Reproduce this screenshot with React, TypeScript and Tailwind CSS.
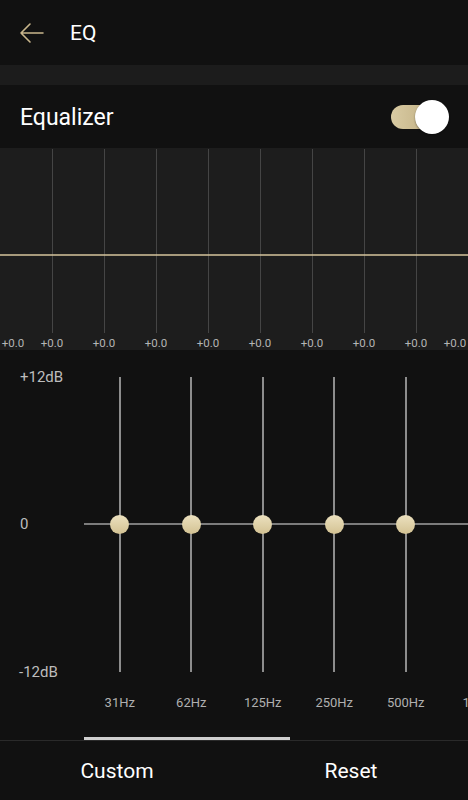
const gridX = [52, 104, 156, 208, 260, 312, 364, 416];
const valueLabels = [13, 52, 104, 156, 208, 260, 312, 364, 416, 455];
const bands = ["31Hz", "62Hz", "125Hz", "250Hz", "500Hz", "1kHz"];

function BackArrow() {
  return (
    <svg width="26" height="22" viewBox="0 0 26 22" fill="none" stroke="#c9b68c" strokeWidth="1.6" strokeLinecap="round" strokeLinejoin="round">
      <path d="M24 11H2M11 2 2 11l9 9" />
    </svg>
  );
}

function Curve() {
  return (
    <svg width="468" height="202" className="block">
      {gridX.map((x) => (
        <line key={x} x1={x + 0.5} y1="1" x2={x + 0.5} y2="185" stroke="#454545" strokeWidth="1" />
      ))}
      <line x1="0" y1="107" x2="468" y2="107" stroke="#d6c59c" strokeWidth="1.6" />
    </svg>
  );
}

export default function App() {
  return (
    <div className="w-[468px] h-[800px] bg-[#111111] text-white overflow-hidden flex flex-col" style={{ fontFamily: "Roboto, 'Noto Sans', sans-serif" }}>
      <div className="h-[65px] flex items-center pl-[19px] shrink-0">
        <BackArrow />
        <span className="ml-[25px] text-[21px] leading-none pt-[2px]">EQ</span>
      </div>
      <div className="h-[20px] bg-[#1c1c1c] shrink-0" />
      <div className="h-[63px] flex items-center justify-between pl-5 pr-[19px] shrink-0">
        <span className="text-[23px] leading-none pt-[2px]">Equalizer</span>
        <div className="relative w-[58px] h-[34px]">
          <div className="absolute left-0 top-[5px] w-[52px] h-[24px] rounded-full bg-gradient-to-r from-[#d9cba3] to-[#bba97c]" />
          <div className="absolute right-0 top-0 w-[34px] h-[34px] rounded-full bg-white shadow-[0_1px_2px_rgba(0,0,0,0.4)]" />
        </div>
      </div>
      <div className="relative h-[202px] bg-[#1d1d1d] shrink-0">
        <Curve />
        {valueLabels.map((x) => (
          <span key={x} className="absolute top-[188px] -translate-x-1/2 text-[11.5px] leading-[14px] text-[#b4b4b4]" style={{ left: x }}>
            +0.0
          </span>
        ))}
      </div>
      <div className="flex shrink-0 pt-[27px] h-[387px]">
        <div className="w-[84px] shrink-0 pl-5 relative text-[15px] text-[#bdbdbd] leading-none">
          <span className="absolute left-5 top-[-7px]">+12dB</span>
          <span className="absolute left-5 top-[140px]">0</span>
          <span className="absolute left-[19px] top-[288px]">-12dB</span>
        </div>
        <div className="relative flex">
          <div className="absolute left-0 top-[146px] w-[420px] h-[2px] bg-[#7c7c7c]" />
          {bands.map((b) => (
            <div key={b} className="relative w-[71.5px] shrink-0 flex flex-col items-center">
              <div className="w-[2px] h-[295px] bg-[#8d8d8d]" />
              <div className="absolute top-[138px] w-[19px] h-[19px] rounded-full bg-gradient-to-b from-[#ece1bf] to-[#d3c293]" />
              <span className="mt-[24px] text-[13px] leading-none text-[#b0b0b0]">{b}</span>
            </div>
          ))}
        </div>
      </div>
      <div className="h-[3px] shrink-0 flex">
        <div className="ml-[84px] w-[206px] h-[3px] bg-[#cfcfcf]" />
      </div>
      <div className="border-t border-[#2a2a2a] flex-1 flex">
        <div className="w-1/2 flex items-center justify-center text-[21px] pt-[3px]">Custom</div>
        <div className="w-1/2 flex items-center justify-center text-[21px] pt-[3px]">Reset</div>
      </div>
    </div>
  );
}
